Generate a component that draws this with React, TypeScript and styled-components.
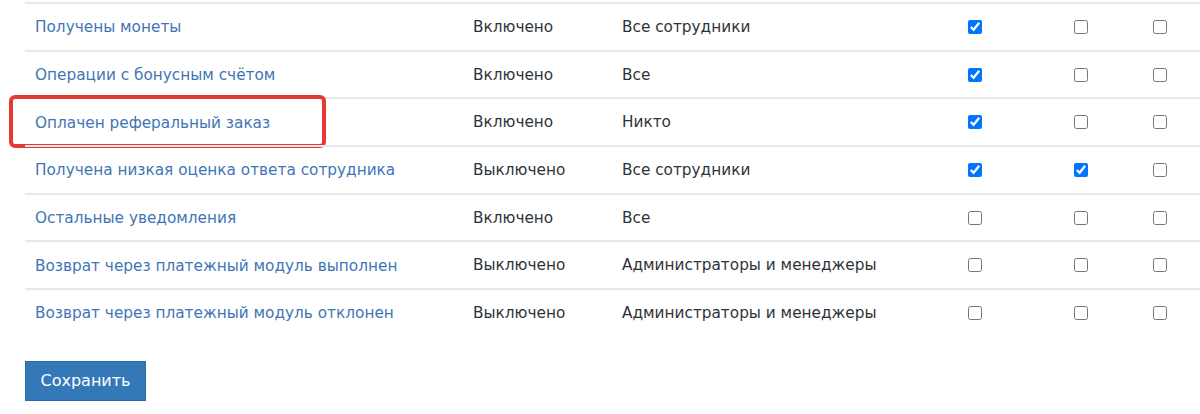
import React, { FunctionComponent } from 'react';
import styled, { createGlobalStyle } from 'styled-components';

type Row = {
  name: string;
  status: string;
  who: string;
  checks: [boolean, boolean, boolean];
  highlight?: boolean;
};

const rows: Row[] = [
  { name: 'Получены монеты', status: 'Включено', who: 'Все сотрудники', checks: [true, false, false] },
  { name: 'Операции с бонусным счётом', status: 'Включено', who: 'Все', checks: [true, false, false] },
  { name: 'Оплачен реферальный заказ', status: 'Включено', who: 'Никто', checks: [true, false, false], highlight: true },
  { name: 'Получена низкая оценка ответа сотрудника', status: 'Выключено', who: 'Все сотрудники', checks: [true, true, false] },
  { name: 'Остальные уведомления', status: 'Включено', who: 'Все', checks: [false, false, false] },
  { name: 'Возврат через платежный модуль выполнен', status: 'Выключено', who: 'Администраторы и менеджеры', checks: [false, false, false] },
  { name: 'Возврат через платежный модуль отклонен', status: 'Выключено', who: 'Администраторы и менеджеры', checks: [false, false, false] },
];

const App: FunctionComponent = () => (
  <>
    <GlobalStyle />
    <Page>
      <Table>
        {rows.map((row) => (
          <TableRow key={row.name}>
            {row.highlight && <Highlight />}
            <NameCell>
              <NameLink href="#">{row.name}</NameLink>
            </NameCell>
            <TextCell>{row.status}</TextCell>
            <TextCell>{row.who}</TextCell>
            {row.checks.map((checked, j) => (
              <CheckCell key={j}>
                <Checkbox type="checkbox" defaultChecked={checked} />
              </CheckCell>
            ))}
          </TableRow>
        ))}
      </Table>
      <SaveButton type="button">Сохранить</SaveButton>
    </Page>
  </>
);

const GlobalStyle = createGlobalStyle`
  body {
    margin: 0;
    background: #fff;
    font-family: 'DejaVu Sans', 'Noto Sans', sans-serif;
  }
`;

const Page = styled.div`
  padding: 2px 0 0 25px;
  width: 1175px;
`;

const Table = styled.div`
  display: flex;
  flex-direction: column;
`;

const TableRow = styled.div`
  position: relative;
  display: grid;
  grid-template-columns: 438px 149px 296px 134px 78px 80px;
  height: 45.7px;
  align-items: center;
  border-top: 2px solid #e8e8e8;
`;

const Highlight = styled.div`
  position: absolute;
  left: -16px;
  top: -4px;
  width: 317px;
  height: 53px;
  box-sizing: border-box;
  border: 4px solid #e53935;
  border-radius: 6px;
  pointer-events: none;
`;

const NameCell = styled.div`
  padding-left: 10px;
`;

const NameLink = styled.a`
  font-size: 15.3px;
  color: #4175b5;
  text-decoration: none;
`;

const TextCell = styled.div`
  padding-left: 10px;
  font-size: 15.3px;
  color: #2f3337;
`;

const CheckCell = styled.div`
  display: flex;
  justify-content: center;
`;

const Checkbox = styled.input`
  margin: 0;
  width: 14px;
  height: 14px;
`;

const SaveButton = styled.button`
  margin-top: 25px;
  width: 121px;
  height: 40px;
  background: #3479b7;
  border: 1px solid #2c69a2;
  color: #fff;
  font-family: 'DejaVu Sans', 'Noto Sans', sans-serif;
  font-size: 16px;
  padding: 0;
  cursor: pointer;
`;

export default App;
